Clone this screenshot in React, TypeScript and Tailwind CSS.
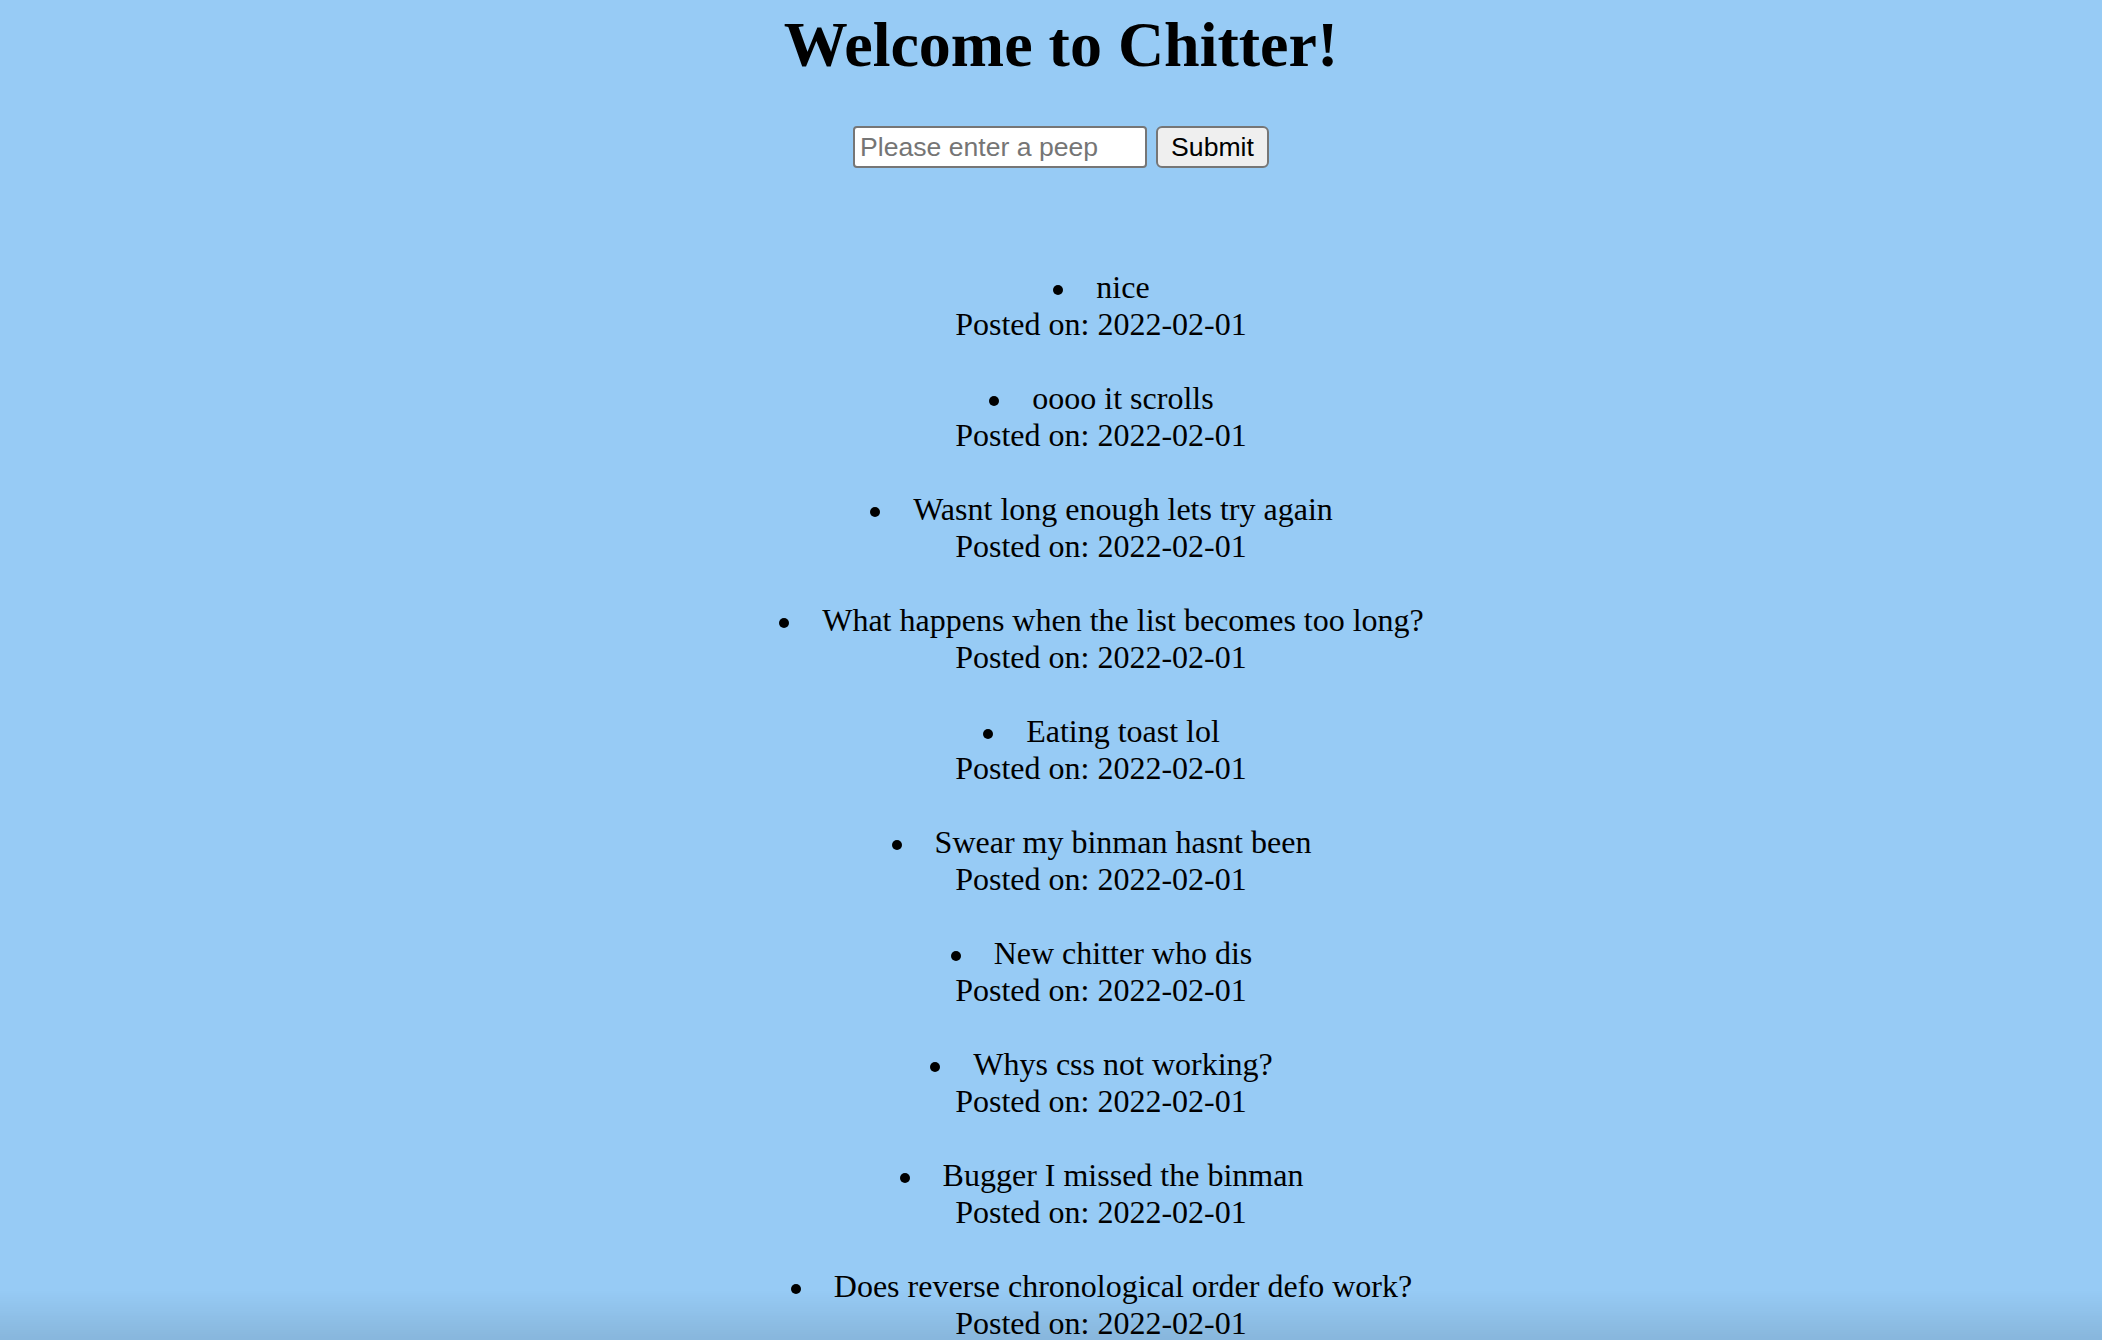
const PEEPS = [
  "nice",
  "oooo it scrolls",
  "Wasnt long enough lets try again",
  "What happens when the list becomes too long?",
  "Eating toast lol",
  "Swear my binman hasnt been",
  "New chitter who dis",
  "Whys css not working?",
  "Bugger I missed the binman",
  "Does reverse chronological order defo work?",
];

const Peep = ({ text }: { text: string }) => (
  <li className="flex flex-col">
    <div className="pl-[44px] leading-[37px]">
      <span className="relative inline-block">
        {/* list marker */}
        <span className="absolute right-[calc(100%+33px)] top-[16px] w-[10px] h-[10px] rounded-full bg-black" />
        {text}
      </span>
    </div>
    <div className="leading-[37px]">Posted on: 2022-02-01</div>
  </li>
);

export default function App() {
  return (
    <div className="relative min-h-screen bg-[#97cbf5] text-black pl-[20px] text-center font-['Liberation_Serif',serif] text-[32px]">
      <h1 className="pt-[8px] text-[64px] font-bold leading-[74px]">Welcome to Chitter!</h1>

      <form className="mt-[44px] flex justify-center gap-[9px]" onSubmit={(e) => e.preventDefault()}>
        <input
          type="text"
          placeholder="Please enter a peep"
          className="w-[294px] h-[42px] px-[5px] bg-white border-2 border-[#767676] rounded-[4px] font-['Liberation_Sans',Arial,sans-serif] text-[26.6px] text-black placeholder:text-[#757575] outline-none"
        />
        <button
          type="submit"
          className="w-[113px] h-[42px] bg-[#efefef] border-2 border-[#767676] rounded-[6px] font-['Liberation_Sans',Arial,sans-serif] text-[26.6px] text-black"
        >
          Submit
        </button>
      </form>

      <ul className="mt-[101px] pl-[80px] flex flex-col gap-[37px] pb-[40px]">
        {PEEPS.map((p, i) => (
          <Peep key={i} text={p} />
        ))}
      </ul>

      {/* bottom edge shade */}
      <div className="fixed left-0 right-0 bottom-0 h-[50px] bg-gradient-to-b from-transparent to-black/10 pointer-events-none" />
    </div>
  );
}
